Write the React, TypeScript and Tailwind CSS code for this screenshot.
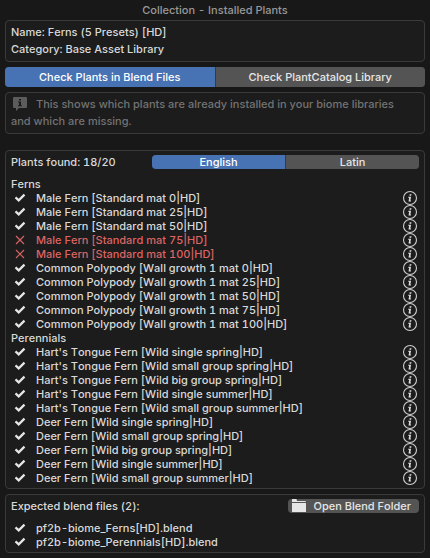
import { useState, type ReactNode } from 'react';

type Plant = { name: string; installed: boolean };
type Group = { label: string; plants: Plant[] };

const plant = (name: string, installed = true): Plant => ({ name, installed });

const groups: Group[] = [
  {
    label: 'Ferns',
    plants: [
      plant('Male Fern [Standard mat 0|HD]'),
      plant('Male Fern [Standard mat 25|HD]'),
      plant('Male Fern [Standard mat 50|HD]'),
      plant('Male Fern [Standard mat 75|HD]', false),
      plant('Male Fern [Standard mat 100|HD]', false),
      plant('Common Polypody [Wall growth 1 mat 0|HD]'),
      plant('Common Polypody [Wall growth 1 mat 25|HD]'),
      plant('Common Polypody [Wall growth 1 mat 50|HD]'),
      plant('Common Polypody [Wall growth 1 mat 75|HD]'),
      plant('Common Polypody [Wall growth 1 mat 100|HD]'),
    ],
  },
  {
    label: 'Perennials',
    plants: [
      plant("Hart's Tongue Fern [Wild single spring|HD]"),
      plant("Hart's Tongue Fern [Wild small group spring|HD]"),
      plant("Hart's Tongue Fern [Wild big group spring|HD]"),
      plant("Hart's Tongue Fern [Wild single summer|HD]"),
      plant("Hart's Tongue Fern [Wild small group summer|HD]"),
      plant('Deer Fern [Wild single spring|HD]'),
      plant('Deer Fern [Wild small group spring|HD]'),
      plant('Deer Fern [Wild big group spring|HD]'),
      plant('Deer Fern [Wild single summer|HD]'),
      plant('Deer Fern [Wild small group summer|HD]'),
    ],
  },
];

const files = ['pf2b-biome_Ferns[HD].blend', 'pf2b-biome_Perennials[HD].blend'];

function CheckIcon() {
  return (
    <svg viewBox="0 0 14 14" className="size-3.5 shrink-0" fill="none" stroke="#e6e6e6" strokeWidth="2.200" aria-hidden="true">
      <path d="M2.500 6.400 5.700 9.400 11.500 3.600" />
    </svg>
  );
}

function CrossIcon() {
  return (
    <svg viewBox="0 0 14 14" className="size-3.5 shrink-0" fill="none" stroke="#dc6464" strokeWidth="1.100" aria-hidden="true">
      <path d="M3 3 11 11M11 3 3 11" />
    </svg>
  );
}

function InfoIcon() {
  return (
    <svg viewBox="0 0 14 14" className="size-3.5 overflow-visible" aria-hidden="true">
      <circle cx="7" cy="7" r="6.500" fill="none" stroke="#cfcfcf" strokeWidth="1.100" />
      <path d="M6.700 3.200h1.800l-.3 1.600H6.400zM5.300 5.800h2.800l-.8 3.600h.8l-.2 1H5.500l.7-3.600h-1z" fill="#dedede" />
    </svg>
  );
}

function SpeechInfoIcon() {
  return (
    <svg viewBox="0 0 14 14" className="mr-[9px] ml-[2px] inline-block size-3.5 align-[-3px]" aria-hidden="true">
      <path
        fillRule="evenodd"
        d="M1 0h12a1 1 0 0 1 1 1v9a1 1 0 0 1-1 1H6l-3 3v-3H1a1 1 0 0 1-1-1V1a1 1 0 0 1 1-1zM6 2v1.600h2V2zM5 4.600v1h1v2.600H5v1h4v-1H8V4.600z"
        fill="#5c5c5c"
      />
    </svg>
  );
}

function FolderIcon() {
  return (
    <svg viewBox="0 0 14 14" className="size-3.5 shrink-0" fill="#e6e6e6" aria-hidden="true">
      <path d="M0 3V.500q0-.5.500-.5H4q.5 0 .7.500L5 2h8q1 0 1 1zM0 4h14v8.500q0 .5-.5.500H.500q-.5 0-.5-.5z" />
    </svg>
  );
}

function Box({ children, className = '' }: { children: ReactNode; className?: string }) {
  return (
    <section className={`rounded-sm border border-[#3a3a3a] bg-[#1c1c1c] px-[5px] ${className}`}>{children}</section>
  );
}

function Segmented({ options, size }: { options: string[]; size: string }) {
  const [active, setActive] = useState(0);
  return (
    <div className="grid grid-cols-2 gap-px overflow-hidden rounded-sm bg-[#3a3a3a] text-center">
      {options.map((option, index) => (
        <button
          key={option}
          type="button"
          aria-pressed={active === index}
          onClick={() => setActive(index)}
          className={`${size} ${active === index ? 'bg-[#4772b3] text-white' : 'bg-[#545454] text-[#e6e6e6]'}`}
        >
          {option}
        </button>
      ))}
    </div>
  );
}

export default function App() {
  return (
    <main className="min-h-screen bg-[#181818] px-[5px] pb-[5px] font-['Inter',sans-serif] text-[11px] leading-[14px] font-medium text-[#d9d9d9] tabular-nums [font-kerning:none] [text-rendering:optimizeSpeed]">
      <h1 className="h-5 text-center leading-5 text-[#989898]">Collection - Installed Plants</h1>

      <Box className="py-[3px] leading-[17px]">
        <p>Name: Ferns (5 Presets) [HD]</p>
        <p>Category: Base Asset Library</p>
      </Box>

      <div className="mt-[5px] mb-[5px]">
        <Segmented options={['Check Plants in Blend Files', 'Check PlantCatalog Library']} size="h-5" />
      </div>

      <Box className="py-[3px] leading-[17px] text-[#737373]">
        <p>
          <SpeechInfoIcon />
          This shows which plants are already installed in your biome libraries
          <br />
          and which are missing.
        </p>
      </Box>

      <Box className="mt-4 pt-1 pb-[3px]">
        <div className="mb-2 grid grid-cols-[1fr_267px] items-center">
          <p>Plants found: 18/20</p>
          <Segmented options={['English', 'Latin']} size="h-3.5" />
        </div>
        {groups.map((group) => (
          <div key={group.label}>
            <h2>{group.label}</h2>
            <ul>
              {group.plants.map(({ name, installed }) => (
                <li key={name} className="flex h-3.5 items-center px-[2px]">
                  {installed ? <CheckIcon /> : <CrossIcon />}
                  <span className={`ml-[9px] grow ${installed ? '' : 'text-[#dc6464]'}`}>{name}</span>
                  <button type="button" aria-label={`About ${name}`}>
                    <InfoIcon />
                  </button>
                </li>
              ))}
            </ul>
          </div>
        ))}
      </Box>

      <Box className="mt-[5px] pt-1 pb-[3px]">
        <div className="mb-2 flex items-center justify-between">
          <p>Expected blend files (2):</p>
          <button type="button" className="flex h-3.5 items-center gap-[7px] rounded-sm bg-[#545454] pr-2 pl-1 text-[#e6e6e6]">
            <FolderIcon />
            Open Blend Folder
          </button>
        </div>
        <ul>
          {files.map((file) => (
            <li key={file} className="flex h-3.5 items-center gap-[9px] pl-[2px]">
              <CheckIcon />
              {file}
            </li>
          ))}
        </ul>
      </Box>
    </main>
  );
}
